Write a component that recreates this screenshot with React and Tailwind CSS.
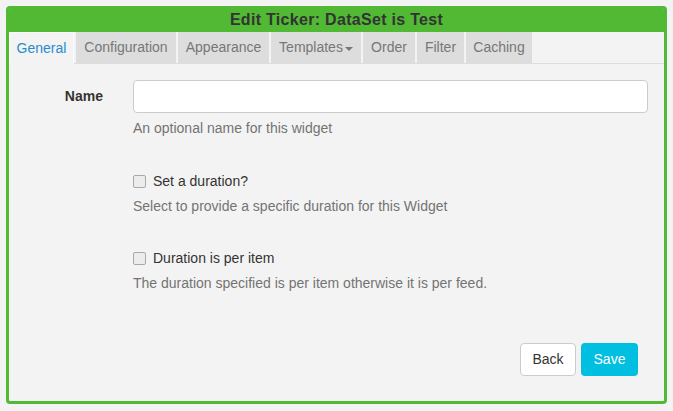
import { useState } from "react";

const tabs = [
    { label: "General", w: "w-[65px]" },
    { label: "Configuration", w: "w-[100px]" },
    { label: "Appearance", w: "w-[91px]" },
    { label: "Templates", w: "w-[90px]" },
    { label: "Order", w: "w-[52px]" },
    { label: "Filter", w: "w-[47px]" },
    { label: "Caching", w: "w-[66px]" },
];

export default function App() {
    const [active, setActive] = useState("General");
    const [name, setName] = useState("");

    return (
        <div className="min-h-screen bg-[#f3f3f3] p-[6px] font-['Liberation_Sans',Arial,sans-serif] text-[14px] text-[#333]">
            <div className="w-[661px] h-[398px] rounded-[4px] border-[3px] border-[#51b934] bg-[#f3f3f3] flex flex-col overflow-hidden">
                <div className="h-[23px] bg-[#51b934] text-center text-[16px] font-bold leading-[21px] tracking-[0.3px] text-[#333]">
                    Edit Ticker: DataSet is Test
                </div>

                <div className="flex gap-[2px] h-[32px] border-b border-[#dddddd]">
                    {tabs.map((t) => (
                        <button
                            key={t.label}
                            onClick={() => setActive(t.label)}
                            className={
                                t.label === active
                                    ? `${t.w} h-[32px] bg-[#f3f3f3] border-x border-t border-[#fbfbfb] text-[#2a8ccd] flex items-center justify-center`
                                    : `${t.w} h-[31px] bg-[#dddddd] text-[#777] flex items-center justify-center`
                            }
                        >
                            {t.label}
                            {t.label === "Templates" && (
                                <span className="ml-[2px] mt-[2px] border-x-[4px] border-t-[4px] border-x-transparent border-t-[#777]" />
                            )}
                        </button>
                    ))}
                </div>

                <div className="flex-1 flex flex-col pt-[16px] pr-[16px]">
                    <div className="flex">
                        <label className="w-[124px] shrink-0 pr-[30px] text-right font-bold leading-[33px]">
                            Name
                        </label>
                        <div className="flex-1">
                            <input
                                value={name}
                                onChange={(e) => setName(e.target.value)}
                                className="w-full h-[33px] bg-white border border-[#cccccc] rounded-[4px] px-3 outline-none"
                            />
                            <p className="mt-[5px] leading-[20px] text-[#737373]">An optional name for this widget</p>
                        </div>
                    </div>

                    <div className="ml-[124px] mt-[33px]">
                        <label className="flex items-center gap-[7px] leading-[20px]">
                            <input
                                type="checkbox"
                                className="appearance-none w-[13px] h-[13px] border border-[#a9a9a9] rounded-[2px] bg-[#ececec] checked:bg-[#2a8ccd]"
                            />
                            Set a duration?
                        </label>
                        <p className="mt-[5px] leading-[20px] text-[#737373]">
                            Select to provide a specific duration for this Widget
                        </p>
                    </div>

                    <div className="ml-[124px] mt-[32px]">
                        <label className="flex items-center gap-[7px] leading-[20px]">
                            <input
                                type="checkbox"
                                className="appearance-none w-[13px] h-[13px] border border-[#a9a9a9] rounded-[2px] bg-[#ececec] checked:bg-[#2a8ccd]"
                            />
                            Duration is per item
                        </label>
                        <p className="mt-[5px] leading-[20px] text-[#737373]">
                            The duration specified is per item otherwise it is per feed.
                        </p>
                    </div>

                    <div className="mt-[50px] flex justify-end gap-[5px] pr-[10px]">
                        <button className="w-[56px] h-[33px] bg-white border border-[#cccccc] rounded-[4px] text-[#333]">
                            Back
                        </button>
                        <button className="w-[57px] h-[33px] bg-[#00bfe0] rounded-[4px] text-white">
                            Save
                        </button>
                    </div>
                </div>
            </div>
        </div>
    );
}
